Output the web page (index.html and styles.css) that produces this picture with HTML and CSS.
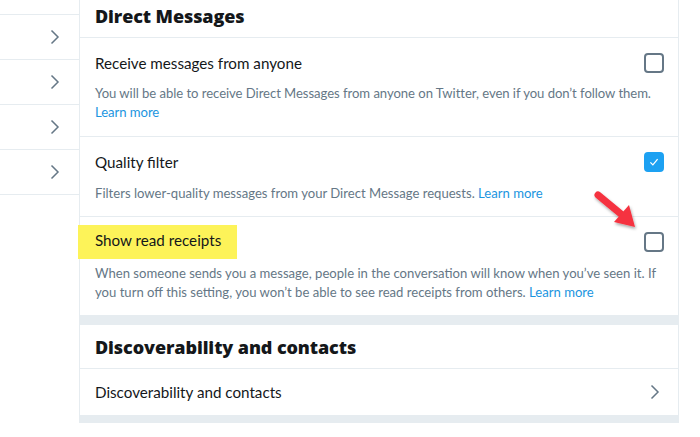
FILE: index.html
```html
<!DOCTYPE html>
<html>
<head>
<meta charset="utf-8">
<link rel="stylesheet" href="styles.css">
</head>
<body>
<div class="page">
  <nav class="side">
    <div class="side-top"></div>
    <div class="side-row"><svg class="chev" viewBox="0 0 10 16"><path d="M1.5 1.5 L8 8 L1.5 14.5"/></svg></div>
    <div class="side-row"><svg class="chev" viewBox="0 0 10 16"><path d="M1.5 1.5 L8 8 L1.5 14.5"/></svg></div>
    <div class="side-row"><svg class="chev" viewBox="0 0 10 16"><path d="M1.5 1.5 L8 8 L1.5 14.5"/></svg></div>
    <div class="side-row"><svg class="chev" viewBox="0 0 10 16"><path d="M1.5 1.5 L8 8 L1.5 14.5"/></svg></div>
  </nav>
  <main class="main">
    <div class="sec-head first"><h2>Direct Messages</h2></div>
    <div class="setting s1">
      <div class="set-top">
        <span class="set-title">Receive messages from anyone</span>
        <span class="box"></span>
      </div>
      <p class="desc tight">You will be able to receive Direct Messages from anyone on Twitter, even if you don’t follow them. <a>Learn more</a></p>
    </div>
    <div class="setting s2">
      <div class="set-top">
        <span class="set-title">Quality filter</span>
        <span class="box checked"><svg viewBox="0 0 20 20"><path d="M5.5 10.5 L8.6 13.6 L14.5 6.5"/></svg></span>
      </div>
      <p class="desc">Filters lower-quality messages from your Direct Message requests. <a>Learn more</a></p>
    </div>
    <div class="setting s3">
      <div class="set-top">
        <span class="set-title hl">Show read receipts</span>
        <span class="box"></span>
      </div>
      <p class="desc">When someone sends you a message, people in the conversation will know when you’ve seen it. If you turn off this setting, you won’t be able to see read receipts from others. <a>Learn more</a></p>
      <svg class="arrow" viewBox="0 0 60 50">
        <defs>
          <filter id="sh" x="-30%" y="-30%" width="160%" height="160%">
            <feDropShadow dx="1" dy="2" stdDeviation="1.5" flood-color="#000" flood-opacity="0.35"/>
          </filter>
        </defs>
        <g filter="url(#sh)">
          <path d="M6 7 L29 26" stroke="#f5333f" stroke-width="7" stroke-linecap="round" fill="none"/>
          <path d="M22 34 L43 39 L37 17 Z" fill="#f5333f"/>
        </g>
      </svg>
    </div>
    <div class="gap"></div>
    <div class="sec-head"><h2>Discoverability and contacts</h2></div>
    <div class="link-row">
      <span class="set-title">Discoverability and contacts</span>
      <svg class="chev" viewBox="0 0 10 16"><path d="M1.5 1.5 L8 8 L1.5 14.5"/></svg>
    </div>
    <div class="gap bottom"></div>
  </main>
</div>
</body>
</html>
```
FILE: styles.css
```css
* { box-sizing: border-box; }
html, body { margin: 0; padding: 0; background: #fff; }
body {
  font-family: "Open Sans", "Noto Sans", sans-serif;
  color: #14171a;
  overflow: hidden;
  height: 437px;
}
.page { display: flex; align-items: flex-start; }

.side { width: 80px; border-right: 1px solid #e6ecf0; height: 423px; }
.side-top { height: 15px; border-bottom: 1px solid #e6ecf0; }
.side-row {
  height: 45px;
  border-bottom: 1px solid #e6ecf0;
  display: flex;
  align-items: center;
  justify-content: flex-end;
  padding-right: 20px;
  margin-right: -1px;
}

.chev { width: 10px; height: 16px; fill: none; stroke: #657786; stroke-width: 1.5; }

.main { width: 599px; border-right: 1px solid #e6ecf0; }
.sec-head {
  height: 44px;
  border-bottom: 1px solid #e6ecf0;
  display: flex;
  align-items: center;
  padding: 0 15px;
}
.sec-head.first { height: 38px; padding-bottom: 6px; }
.sec-head h2 { margin: 0; font-size: 18px; font-weight: 800; letter-spacing: -0.1px; }

.setting {
  position: relative;
  border-bottom: 1px solid #e6ecf0;
  padding: 14px 15px 0 15px;
}
.s1 { height: 99px; }
.s2 { height: 80px; }
.s3 { height: 98px; border-bottom: none; }

.set-top { display: flex; justify-content: space-between; align-items: center; height: 22px; }
.set-title { font-family: "Lato", sans-serif; font-size: 15.2px; line-height: 22px; }
.hl {
  background: #fdf359;
  margin-left: -17px;
  padding: 4px 16px 8px 17px;
}

.box {
  width: 20px; height: 20px;
  border: 2px solid #657786;
  border-radius: 4px;
  margin-right: -1px;
  display: flex;
}
.box.checked { background: #1da1f2; border-color: #1da1f2; }
.box svg { width: 16px; height: 16px; fill: none; stroke: #fff; stroke-width: 1.6; }

.desc {
  margin: 10px 0 0 0;
  font-family: "Lato", sans-serif;
  font-size: 13.1px;
  line-height: 19px;
  color: #657786;
}
.desc.tight { letter-spacing: -0.05px; margin-right: 6px; }
.desc a { color: #1b95e0; }
.s2 .desc { margin-top: 11px; }
.s3 .desc { margin-top: 11px; }

.arrow { position: absolute; width: 60px; height: 50px; left: 512px; top: -29px; }

.gap { height: 10px; background: #e6ecf0; margin-right: -1px; }
.gap.bottom { height: 8px; }

.link-row {
  height: 46px;
  display: flex;
  align-items: center;
  justify-content: space-between;
  padding: 0 18px 0 15px;
}
```
